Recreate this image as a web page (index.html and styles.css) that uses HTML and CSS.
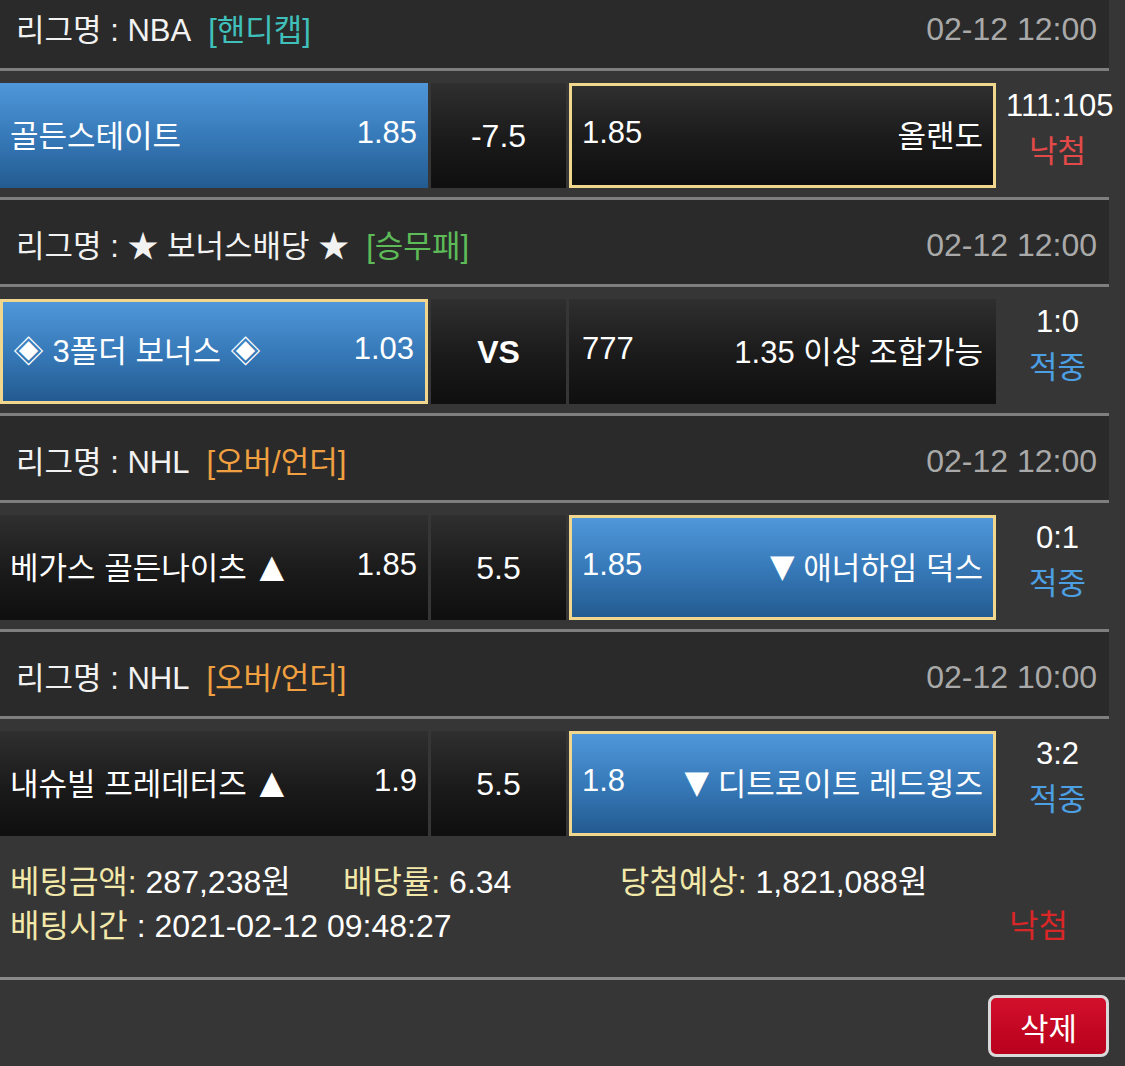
FILE: index.html
```html
<!DOCTYPE html>
<html lang="ko">
<head>
<meta charset="utf-8">
<title>베팅내역</title>
<link rel="stylesheet" href="styles.css">
</head>
<body>
<div class="list">
  <section class="game">
    <div class="league">
      <span class="league-name">리그명 : NBA</span>
      <span class="tag tag-handi">[핸디캡]</span>
      <span class="date">02-12 12:00</span>
    </div>
    <div class="bet">
      <div class="cell home blue"><span class="team">골든스테이트</span><span class="odds">1.85</span></div>
      <div class="cell mid dark">-7.5</div>
      <div class="cell away dark picked"><span class="odds">1.85</span><span class="team">올랜도</span></div>
      <div class="result"><div class="score">111:105</div><div class="st-lose">낙첨</div></div>
    </div>
  </section>

  <section class="game">
    <div class="league">
      <span class="league-name">리그명 : ★ 보너스배당 ★</span>
      <span class="tag tag-wdl">[승무패]</span>
      <span class="date">02-12 12:00</span>
    </div>
    <div class="bet">
      <div class="cell home blue picked"><span class="team">◈ 3폴더 보너스 ◈</span><span class="odds">1.03</span></div>
      <div class="cell mid dark vs">VS</div>
      <div class="cell away dark"><span class="odds">777</span><span class="team">1.35 이상 조합가능</span></div>
      <div class="result"><div class="score">1:0</div><div class="st-win">적중</div></div>
    </div>
  </section>

  <section class="game">
    <div class="league">
      <span class="league-name">리그명 : NHL</span>
      <span class="tag tag-ou">[오버/언더]</span>
      <span class="date">02-12 12:00</span>
    </div>
    <div class="bet">
      <div class="cell home dark"><span class="team">베가스 골든나이츠 <span class="arrow arrow-up">▲</span></span><span class="odds">1.85</span></div>
      <div class="cell mid dark">5.5</div>
      <div class="cell away blue picked"><span class="odds">1.85</span><span class="team"><span class="arrow">▼</span> 애너하임 덕스</span></div>
      <div class="result"><div class="score">0:1</div><div class="st-win">적중</div></div>
    </div>
  </section>

  <section class="game">
    <div class="league">
      <span class="league-name">리그명 : NHL</span>
      <span class="tag tag-ou">[오버/언더]</span>
      <span class="date">02-12 10:00</span>
    </div>
    <div class="bet">
      <div class="cell home dark"><span class="team">내슈빌 프레데터즈 <span class="arrow arrow-up">▲</span></span><span class="odds">1.9</span></div>
      <div class="cell mid dark">5.5</div>
      <div class="cell away blue picked"><span class="odds">1.8</span><span class="team"><span class="arrow">▼</span> 디트로이트 레드윙즈</span></div>
      <div class="result"><div class="score">3:2</div><div class="st-win">적중</div></div>
    </div>
  </section>
</div>

<div class="summary">
  <div class="sum-row sum-top">
    <span class="sum-item"><span class="label">베팅금액:</span> 287,238원</span>
    <span class="sum-item"><span class="label">배당률:</span> 6.34</span>
    <span class="sum-item"><span class="label">당첨예상:</span> 1,821,088원</span>
  </div>
  <div class="sum-row sum-bottom">
    <span class="sum-item"><span class="label">배팅시간</span> : 2021-02-12 09:48:27</span>
    <span class="sum-status">낙첨</span>
  </div>
</div>

<div class="actions">
  <button class="btn-delete" type="button">삭제</button>
</div>
</body>
</html>
```

FILE: styles.css
```css
html, body {
  margin: 0;
  padding: 0;
}

body {
  background: #363636;
  color: #ffffff;
  font-family: "Liberation Sans", "Noto Sans CJK KR", Arial, sans-serif;
  font-size: 31px;
  width: 1125px;
  height: 1066px;
  overflow: hidden;
}

.list {
  width: 1109px;
  margin-top: -16px;
}

.league {
  height: 87px;
  background: #2a2a2a;
  border-bottom: 3px solid #7e7e7e;
  display: flex;
  align-items: center;
  padding: 2px 12px 0 16px;
  box-sizing: border-box;
  font-size: 31px;
  color: #f2f2f2;
}

.league-name {
  white-space: nowrap;
}

.tag {
  margin-left: 17px;
}

.tag-handi { color: #3fc0bb; }
.tag-wdl { color: #5dbb58; }
.tag-ou { color: #f0a040; }

.date {
  margin-left: auto;
  padding-top: 5px;
  color: #a9a9a9;
  font-size: 32px;
}

.bet {
  display: flex;
  padding: 12px 0 9px;
  border-bottom: 3px solid #7e7e7e;
}

.game:last-child .bet {
  border-bottom: none;
  padding-bottom: 0;
}

.cell {
  height: 105px;
  box-sizing: border-box;
  display: flex;
  align-items: center;
  justify-content: space-between;
  padding: 0 11px 5px 10px;
  white-space: nowrap;
  font-size: 31px;
}

.home { width: 428px; }
.mid {
  width: 135px;
  margin: 0 3px;
  justify-content: center;
  padding: 2px 0 0;
  font-size: 32px;
}
.away { width: 427px; padding: 0 13px 5px 13px; }

.blue {
  background: linear-gradient(to bottom, #4f97da 0%, #3577b6 55%, #235b90 100%);
}

.dark {
  background: linear-gradient(to bottom, #2f2f2f 0%, #1a1a1a 55%, #0f0f0f 100%);
}

.picked {
  border: 3px solid #f1d68d;
  padding: 0 10px 5px 10px;
}

.home.picked { padding: 0 11px 5px 10px; }

.arrow {
  font-family: "DejaVu Sans", sans-serif;
  font-size: 32px;
  vertical-align: 2px;
}

.arrow-up {
  margin-left: 4px;
}

.vs {
  font-weight: bold;
}

.result {
  width: 113px;
  box-sizing: border-box;
  padding-left: 10px;
  text-align: center;
  line-height: 46px;
  white-space: nowrap;
}

.score {
  color: #ffffff;
}

.st-lose { color: #e24a4a; }
.st-win { color: #4c9fe2; }

.summary {
  padding: 24px 10px 29px;
  border-bottom: 3px solid #8a8a8a;
  font-size: 32px;
  line-height: 44px;
}

.sum-top {
  display: grid;
  grid-template-columns: 333px 277px auto;
}

.sum-bottom {
  display: flex;
  justify-content: space-between;
}

.sum-item {
  white-space: nowrap;
}

.label {
  color: #f1e8a9;
}

.sum-status {
  color: #d92626;
  margin-right: 47px;
}

.actions {
  display: flex;
  justify-content: flex-end;
  padding: 15px 16px 0 0;
}

.btn-delete {
  width: 121px;
  height: 62px;
  border: 3px solid #d9d9d9;
  border-radius: 8px;
  background: linear-gradient(to bottom, #d2102c 0%, #b8001c 100%);
  color: #ffffff;
  font-family: inherit;
  font-size: 31px;
  padding: 0;
}
```
